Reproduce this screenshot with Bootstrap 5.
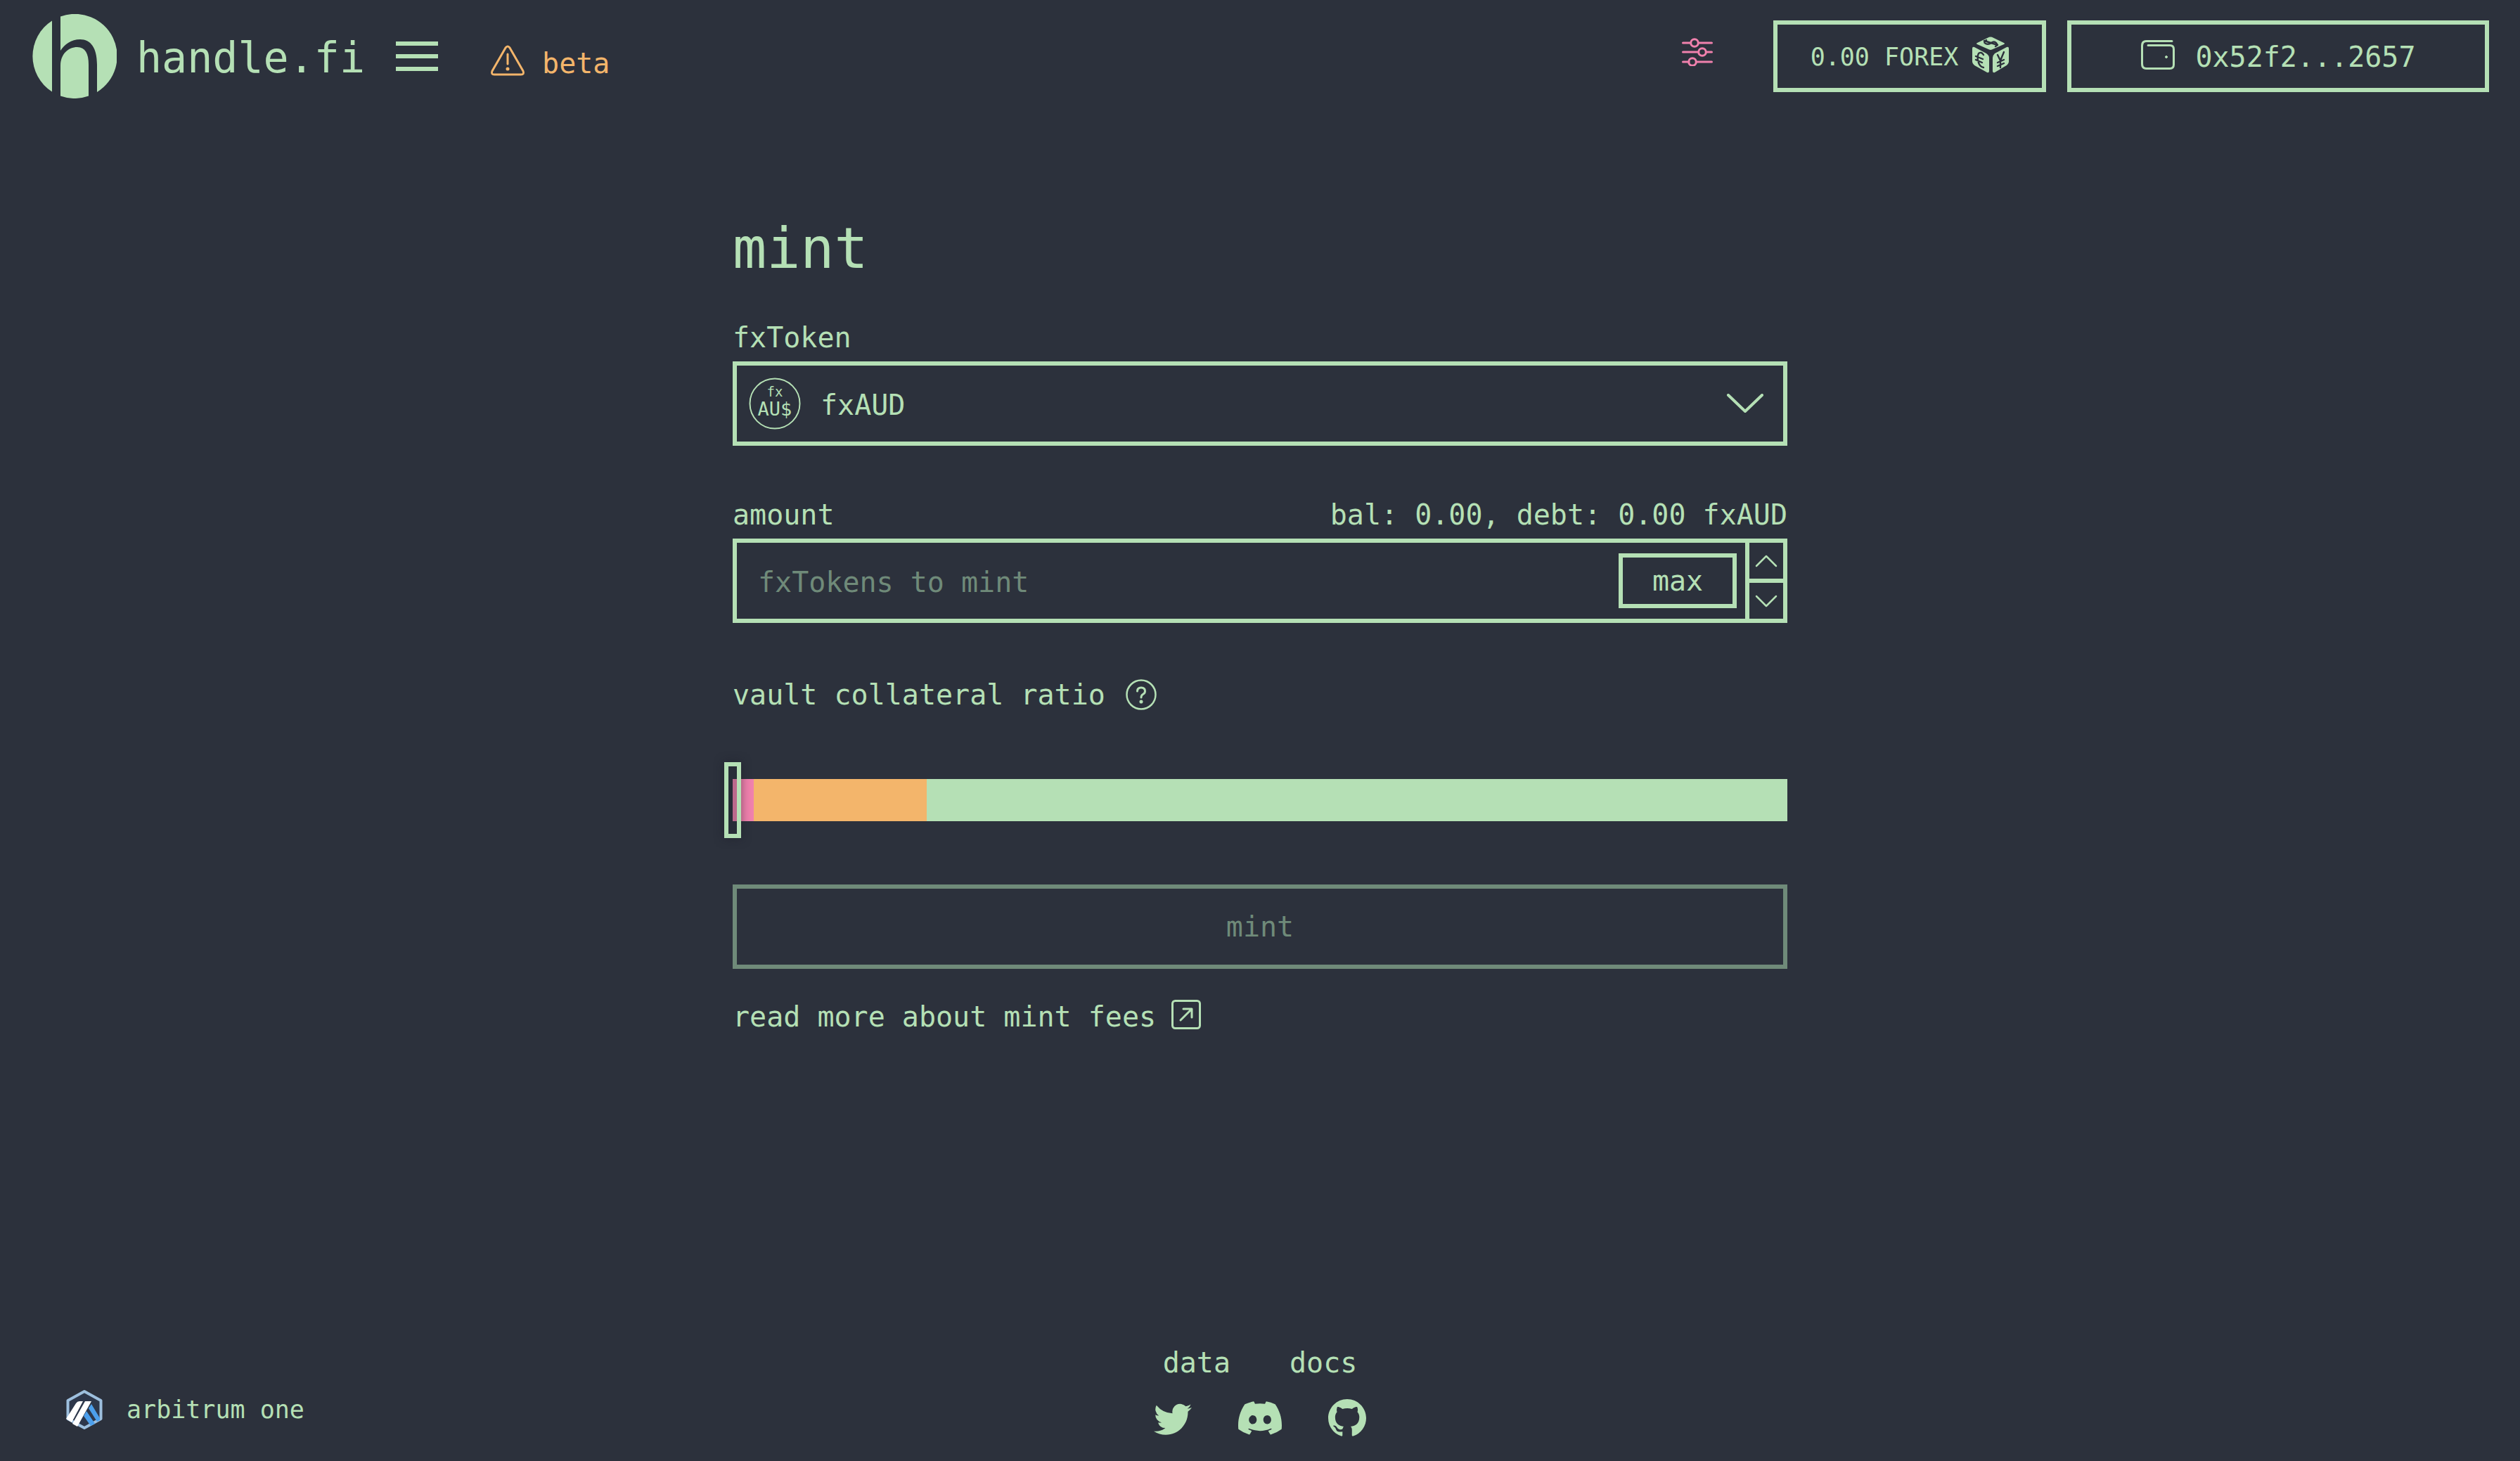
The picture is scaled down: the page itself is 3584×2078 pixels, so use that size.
<!DOCTYPE html>
<html lang="en">
<head>
<meta charset="utf-8">
<meta name="viewport" content="width=device-width, initial-scale=1">
<title>handle.fi – mint</title>
<link href="https://cdn.jsdelivr.net/npm/bootstrap@5.3.0/dist/css/bootstrap.min.css" rel="stylesheet">
<script src="https://cdn.jsdelivr.net/npm/bootstrap@5.3.0/dist/js/bootstrap.bundle.min.js" defer></script>
<style>
:root { --ink: #b5e0b5; --bg: #2c313c; --dim: #6f8a79; --warn: #f3b56b; --hot: #f081ad; }
body { background: var(--bg); color: var(--ink); font: 40px/48px "DejaVu Sans Mono", monospace; }
a, a:hover { color: inherit; text-decoration: none; }
button { font: inherit; color: inherit; background: none; border: 0; padding: 0; }
svg { display: block; flex: none; }
.line-icon { fill: none; stroke: currentColor; stroke-linecap: round; stroke-linejoin: round; }
.outlined { border: 6px solid var(--ink); border-radius: 0; }

.topbar { height: 160px; padding: 0 44px 0 46px; }
.brand-link { gap: 28px; font-size: 60px; line-height: 60px; }
.brand-link span { padding-top: 4px; }
.beta-tag span { padding-top: 8px; }
.menu-btn { margin-left: 44px; }
.beta-tag { color: var(--warn); gap: 24px; margin-left: 74px; padding-top: 12px; }
.tune-btn { color: var(--hot); margin-right: 86px; padding-bottom: 12px; }
.forex-btn { width: 388px; height: 102px; font-size: 35px; gap: 20px; margin-right: 30px; }
.wallet-btn { width: 600px; height: 102px; gap: 28px; }
.forex-btn span, .wallet-btn span { padding-top: 2px; }

.mint-panel { width: 1500px; max-width: 100%; padding-top: 146px; }
.mint-title { font-size: 80px; line-height: 96px; margin: 0 0 54px; font-weight: 400; }
.field-label { margin-bottom: 10px; }
.token-field, .amount-field { height: 120px; margin-bottom: 74px; }
.token-badge { margin-left: 17px; }
.token-select { appearance: none; background: none; border: 0; color: inherit; font: inherit; height: 108px; padding: 4px 0 0 28px; outline: 0; }
.amount-input { background: none; border: 0; color: inherit; font: inherit; height: 108px; padding: 4px 30px 0; outline: 0; min-width: 0; }
.amount-input::placeholder { color: var(--dim); opacity: 1; }
.max-btn { width: 168px; height: 78px; margin-right: 12px; line-height: 40px; }
.stepper { width: 54px; border-left: 6px solid var(--ink); }
.stepper button { flex: 1; }
.stepper button + button { border-top: 6px solid var(--ink); }
.ratio-label { gap: 29px; margin: 78px 0 72px; }
.ratio-range { appearance: none; display: block; width: calc(100% + 24px); height: 108px; margin: 0 -12px 66px; background: none; outline: 0; }
.ratio-range::-webkit-slider-runnable-track { height: 60px; margin: 0 12px; background: linear-gradient(90deg, var(--hot) 2%, var(--warn) 2% 18.4%, var(--ink) 18.4%); }
.ratio-range::-webkit-slider-thumb { appearance: none; width: 24px; height: 108px; margin: -24px 0 0 -12px; border: 6px solid var(--ink); background: rgba(32,34,44,.25); box-shadow: 0 0 14px rgba(26,26,38,.5); }
.mint-btn { height: 120px; color: var(--dim); border: 6px solid var(--dim); margin-bottom: 44px; }
.fees-link { gap: 22px; width: fit-content; }

.site-foot { display: grid; grid-template-columns: 1fr auto 1fr; padding: 0 94px 30px; }
.network-btn { gap: 34px; font-size: 35px; margin-bottom: 14px; }
.foot-links { gap: 84px; margin-bottom: 24px; }
.foot-social { gap: 66px; }
</style>
</head>
<body class="d-flex flex-column min-vh-100">
<header class="topbar d-flex align-items-center">
  <a href="#" class="brand-link d-flex align-items-center">
    <svg width="120" height="120" viewBox="0 0 120 120" fill="currentColor" aria-hidden="true">
      <path d="M28 9.500V110.500A60 60 0 0 1 28 9.500Z"/>
      <path d="M40 3.500A60 60 0 0 1 92 111V72C92 48 83 36 68 36C55 36 46 43 40 52Z"/>
      <path d="M40 116.500V73C40 57 51 47 64 47C75 47 80 56 80 72V116.500A60 60 0 0 1 40 116.500Z"/>
    </svg>
    <span>handle.fi</span>
  </a>
  <button class="menu-btn" type="button" aria-label="menu"><svg width="60" height="42" viewBox="0 0 60 42" fill="currentColor"><path d="M0 0H60V6H0ZM0 18H60V24H0ZM0 36H60V42H0Z"/></svg></button>
  <div class="beta-tag d-flex align-items-center">
    <svg class="line-icon" width="50" height="44" viewBox="0 0 50 44" stroke-width="3"><path d="M22 4Q25 0 28 4L47 37Q49 42 44 42H6Q1 42 3 37ZM25 13V27"/><circle cx="25" cy="34" r="1.500" fill="currentColor" stroke-width="2"/></svg>
    <span>beta</span>
  </div>
  <button class="tune-btn ms-auto" type="button" aria-label="settings"><svg class="line-icon" width="44" height="40" viewBox="0 0 44 40" stroke-width="3"><path d="M1.500 7H12M24 7H42.500M1.500 20H23M35 20H42.500M1.500 34H10M21 34H42.500"/><circle cx="18" cy="7" r="5.300"/><circle cx="29" cy="20" r="5.300"/><circle cx="15" cy="34" r="5.300"/></svg></button>
  <button class="forex-btn outlined d-flex align-items-center justify-content-center" type="button"><span>0.00 FOREX</span>
    <svg class="mb-1" width="52" height="52" viewBox="0 0 52 52" fill="currentColor" aria-hidden="true">
      <path d="M24 .8Q26 0 28 .8L45 9Q47 10 45 11L28 18.500Q26 19.300 24 18.500L7 11Q5 10 7 9Z"/>
      <path d="M0 17Q0 14 3 15L20 24Q24 27 24 30V49Q24 52 21 51L5 42Q1 40 0 36Z"/>
      <path d="M52 17Q52 14 49 15L32 24Q29 27 29 30V49Q29 52 32 51L47 42Q51 40 52 36Z"/>
      <g fill="none" stroke="#2c313c" stroke-width="2.400" stroke-linecap="round"><path d="M20 5Q15 8 19 10Q23 12 27 9Q31 6 34 9Q37 12 33 14M17 6L36 12"/><path d="M16 26Q13 21 9 24Q7 28 8 34Q10 43 16 44M5 28L15 32M5 33L14 37"/><path d="M36 26L40 34L45 22M40 34V44M36 37L45 33M36 42L45 38"/></g>
    </svg>
  </button>
  <button class="wallet-btn outlined d-flex align-items-center justify-content-center" type="button">
    <svg class="line-icon mb-1" width="50" height="44" viewBox="0 0 50 44" stroke-width="3"><path d="M45 2.500H9Q2.500 2.500 2.500 9V35Q2.500 41.500 9 41.500H42Q47.500 41.500 47.500 36V14Q47.500 8.500 42 8.500H11"/><circle cx="37" cy="25" r="1.500" fill="currentColor" stroke-width="1"/></svg>
    <span>0x52f2...2657</span>
  </button>
</header>

<main class="mint-panel mx-auto">
  <h1 class="mint-title">mint</h1>
  <label class="field-label d-block" for="token">fxToken</label>
  <div class="token-field outlined d-flex align-items-center">
    <svg class="token-badge" width="74" height="74" viewBox="0 0 74 74" aria-hidden="true"><circle cx="37" cy="37" r="35.500" fill="none" stroke="currentColor" stroke-width="2"/><g fill="currentColor" text-anchor="middle"><text x="37" y="27" font-size="19">fx</text><text x="37" y="54" font-size="27">AU$</text></g></svg>
    <select class="token-select flex-grow-1" id="token"><option>fxAUD</option></select>
    <svg class="line-icon me-4" width="60" height="28" viewBox="0 0 60 28" stroke-width="4"><path d="M6 2L30 25L54 2"/></svg>
  </div>
  <div class="field-label d-flex justify-content-between"><label for="amount">amount</label><span>bal: 0.00, debt: 0.00 fxAUD</span></div>
  <div class="amount-field outlined d-flex align-items-center">
    <input class="amount-input flex-grow-1" id="amount" type="text" placeholder="fxTokens to mint">
    <button class="max-btn outlined" type="button">max</button>
    <div class="stepper d-flex flex-column align-self-stretch">
      <button class="d-flex align-items-center justify-content-center" type="button" aria-label="increase"><svg class="line-icon" width="32" height="20" viewBox="0 0 32 20" stroke-width="2.500"><path d="M2 17L16 3L30 17"/></svg></button>
      <button class="d-flex align-items-center justify-content-center" type="button" aria-label="decrease"><svg class="line-icon" width="32" height="20" viewBox="0 0 32 20" stroke-width="2.500"><path d="M2 3L16 17L30 3"/></svg></button>
    </div>
  </div>
  <div class="ratio-label d-flex align-items-center"><label for="ratio">vault collateral ratio</label>
    <svg class="line-icon" width="44" height="44" viewBox="0 0 44 44" stroke-width="2.500"><circle cx="22" cy="22" r="20.500"/><path d="M16.500 17Q16.500 12 22 12Q27.500 12 27.500 17Q27.500 20 24.500 21.500Q22 23 22 26" stroke-width="3"/><circle cx="22" cy="32" r="1.300" fill="currentColor"/></svg>
  </div>
  <input class="ratio-range" id="ratio" type="range" min="0" max="100" value="0">
  <button class="mint-btn w-100 d-block" type="button" disabled>mint</button>
  <a href="#" class="fees-link d-flex align-items-start"><span>read more about mint fees</span>
    <svg class="line-icon" width="42" height="42" viewBox="0 0 42 42" stroke-width="3"><rect x="1.500" y="1.500" width="39" height="39" rx="4"/><path d="M13 29L29 13M17 13H29V25"/></svg>
  </a>
</main>

<footer class="site-foot mt-auto align-items-end">
  <button class="network-btn d-flex align-items-center" type="button">
    <svg width="52" height="58" viewBox="0 0 52 58" aria-hidden="true"><path d="M26 3L49.500 16V42L26 55L2.500 42V16Z" fill="#2d374b" stroke="#9dbfde" stroke-width="4" stroke-linejoin="round"/><path d="M36 21L48 41V44L44 46L32 27ZM29 31L41 49L35 52L25 38Z" fill="#4c9fec"/><path d="M0 42L14 20Q16 17 19 17H24L8 47ZM27 17H36L16 53L9 49Z" fill="#fff"/></svg>
    <span>arbitrum one</span>
  </button>
  <nav class="d-flex flex-column align-items-center" aria-label="footer">
    <div class="foot-links d-flex"><a href="#">data</a><a href="#">docs</a></div>
    <div class="foot-social d-flex align-items-center">
      <a href="#" aria-label="Twitter"><svg width="54" height="54" viewBox="0 0 16 16" fill="currentColor"><path d="M5.026 15c6.038 0 9.341-5.003 9.341-9.334 0-.14 0-.282-.006-.422A6.685 6.685 0 0 0 16 3.542a6.658 6.658 0 0 1-1.889.518 3.301 3.301 0 0 0 1.447-1.817 6.533 6.533 0 0 1-2.087.793A3.286 3.286 0 0 0 7.875 6.030a9.325 9.325 0 0 1-6.767-3.429 3.289 3.289 0 0 0 1.018 4.382A3.323 3.323 0 0 1 .640 6.575v.045a3.288 3.288 0 0 0 2.632 3.218 3.203 3.203 0 0 1-.865.115 3.230 3.230 0 0 1-.614-.057 3.283 3.283 0 0 0 3.067 2.277A6.588 6.588 0 0 1 .780 13.580a6.320 6.320 0 0 1-.780-.045A9.344 9.344 0 0 0 5.026 15z"/></svg></a>
      <a href="#" aria-label="Discord"><svg width="62" height="62" viewBox="0 0 16 16" fill="currentColor"><path d="M13.545 2.907a13.227 13.227 0 0 0-3.257-1.011.050.050 0 0 0-.052.025c-.141.250-.297.577-.406.833a12.190 12.190 0 0 0-3.658 0 8.258 8.258 0 0 0-.412-.833.051.051 0 0 0-.052-.025c-1.125.194-2.220.534-3.257 1.011a.041.041 0 0 0-.021.018C.356 6.024-.213 9.047.066 12.032c.001.014.010.028.021.037a13.276 13.276 0 0 0 3.995 2.020.050.050 0 0 0 .056-.019c.308-.420.582-.863.818-1.329a.050.050 0 0 0-.010-.059.051.051 0 0 0-.018-.011 8.875 8.875 0 0 1-1.248-.595.050.050 0 0 1-.020-.066.051.051 0 0 1 .015-.019c.084-.063.168-.129.248-.195a.050.050 0 0 1 .051-.007c2.619 1.196 5.454 1.196 8.041 0a.052.052 0 0 1 .053.007c.080.066.164.132.248.195a.051.051 0 0 1-.004.085 8.254 8.254 0 0 1-1.249.594.050.050 0 0 0-.030.030.052.052 0 0 0 .003.041c.240.465.515.909.817 1.329a.050.050 0 0 0 .056.019 13.235 13.235 0 0 0 4.001-2.020.049.049 0 0 0 .021-.037c.334-3.451-.559-6.449-2.366-9.106a.034.034 0 0 0-.020-.019Zm-8.198 7.307c-.789 0-1.438-.724-1.438-1.612 0-.889.637-1.613 1.438-1.613.807 0 1.450.730 1.438 1.613 0 .888-.637 1.612-1.438 1.612Zm5.316 0c-.788 0-1.438-.724-1.438-1.612 0-.889.637-1.613 1.438-1.613.807 0 1.451.730 1.438 1.613 0 .888-.631 1.612-1.438 1.612Z"/></svg></a>
      <a href="#" aria-label="GitHub"><svg width="54" height="54" viewBox="0 0 16 16" fill="currentColor"><path d="M8 0C3.580 0 0 3.580 0 8c0 3.540 2.290 6.530 5.470 7.590.400.070.550-.170.550-.380 0-.190-.010-.820-.010-1.490-2.010.370-2.530-.490-2.690-.940-.090-.230-.480-.940-.820-1.130-.280-.150-.680-.520-.010-.530.630-.010 1.080.580 1.230.820.720 1.210 1.870.870 2.330.660.070-.520.280-.870.510-1.070-1.780-.200-3.640-.890-3.640-3.950 0-.870.310-1.590.820-2.150-.080-.200-.360-1.020.080-2.120 0 0 .670-.210 2.200.820.640-.180 1.320-.270 2-.270.680 0 1.360.090 2 .270 1.530-1.040 2.200-.820 2.200-.820.440 1.100.160 1.920.080 2.120.510.560.820 1.270.820 2.150 0 3.070-1.870 3.750-3.650 3.950.290.250.540.730.540 1.480 0 1.070-.010 1.930-.010 2.200 0 .210.150.460.550.380A8.012 8.012 0 0 0 16 8c0-4.420-3.580-8-8-8z"/></svg></a>
    </div>
  </nav>
</footer>
</body>
</html>
